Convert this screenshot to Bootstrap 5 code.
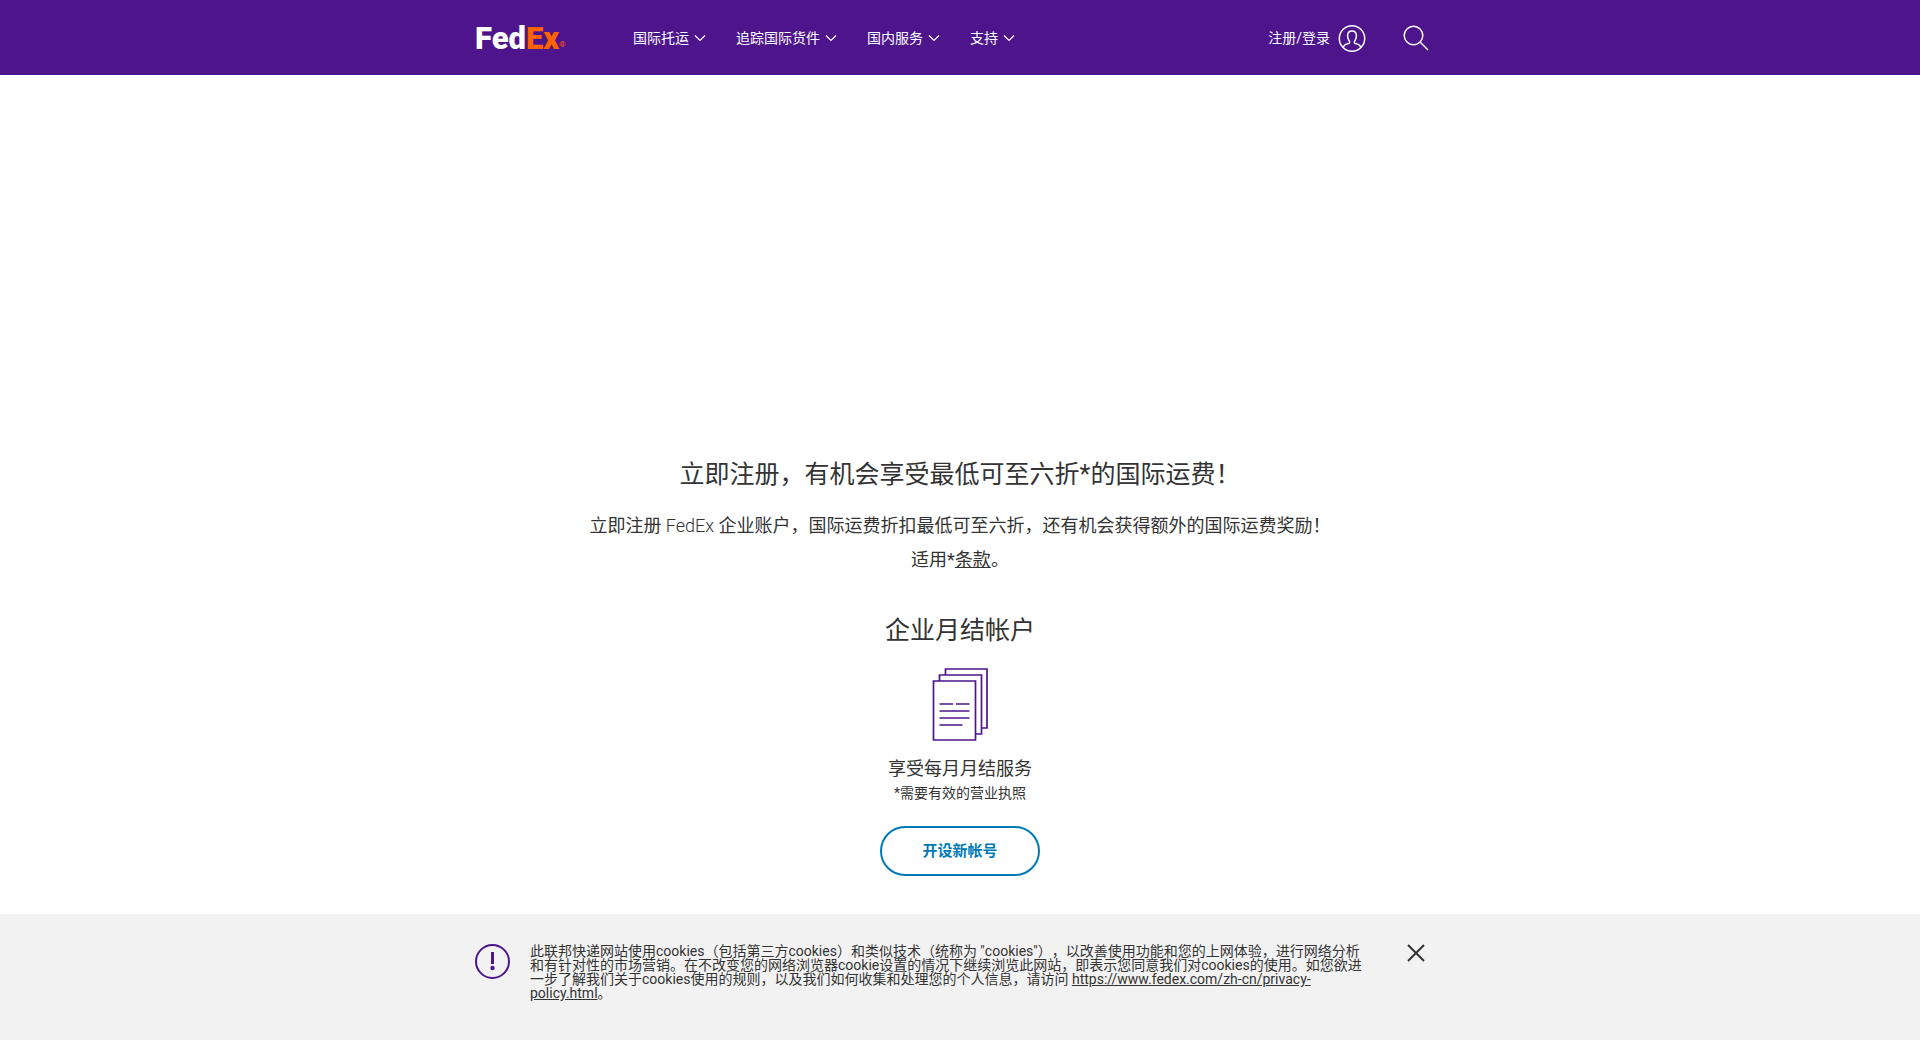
<!DOCTYPE html>
<html lang="zh-CN">
<head>
<meta charset="utf-8">
<meta name="viewport" content="width=device-width, initial-scale=1">
<title>FedEx</title>
<link href="https://cdn.jsdelivr.net/npm/bootstrap@5.3.0/dist/css/bootstrap.min.css" rel="stylesheet">
<style>
body{font-family:Roboto,"Noto Sans CJK SC",sans-serif;font-size:14px;line-height:20px;color:#333;background:#fff;text-spacing-trim:space-all}
.page-width{width:100%;max-width:970px;margin:0 auto}
.site-header{background:#4d148c;min-height:75px}
.brand{font-size:31px;line-height:36px;font-weight:900;color:#fff;width:158px;padding-top:2px}
.brand span{color:#ff6200}
.brand small{font-size:8px;line-height:8px;font-weight:400;color:#ff6200}
.main-menu{gap:30px}
.main-menu button{gap:5px;font-size:14px;line-height:20px}
.account{gap:8px}
.tools{gap:37px;padding-right:16px}
.hero-space{height:380px}
.headline{font-size:25px;line-height:40px;font-weight:400}
.intro{font-size:18px;line-height:34px;margin:14px 0 34px}
.intro .latin{font-weight:300}
.benefit{font-size:18px;line-height:24px}
.note{margin:2px 0 0}
a.terms{color:#333}
.btn-account{border:2px solid #007ab7;color:#007ab7;border-radius:25px;min-width:160px;height:50px;font-size:15px;font-weight:700;margin-top:23px}
.btn-account:hover{background:#007ab7;color:#fff}
.cookie-bar{background:#f2f2f2;min-height:126px;padding-top:30px}
.cookie-text{line-height:14px;max-width:836px}
.cookie-row{gap:20px}
.cookie-close{margin-right:20px}
</style>
</head>
<body>
<header class="site-header d-flex align-items-center">
  <div class="page-width d-flex align-items-center">
    <a href="#" class="brand d-flex align-items-end text-decoration-none" aria-label="FedEx"><div>Fed<span>Ex</span></div><small class="pb-2">®</small></a>
    <nav class="main-menu d-flex align-items-center">
      <button type="button" class="btn btn-link p-0 border-0 text-white text-decoration-none d-flex align-items-center">国际托运<svg width="12" height="8" viewBox="0 0 12 8" fill="none" stroke="#fff" stroke-width="1.2"><path d="M1 1.5l5 5 5-5"/></svg></button>
      <button type="button" class="btn btn-link p-0 border-0 text-white text-decoration-none d-flex align-items-center">追踪国际货件<svg width="12" height="8" viewBox="0 0 12 8" fill="none" stroke="#fff" stroke-width="1.2"><path d="M1 1.5l5 5 5-5"/></svg></button>
      <button type="button" class="btn btn-link p-0 border-0 text-white text-decoration-none d-flex align-items-center">国内服务<svg width="12" height="8" viewBox="0 0 12 8" fill="none" stroke="#fff" stroke-width="1.2"><path d="M1 1.5l5 5 5-5"/></svg></button>
      <button type="button" class="btn btn-link p-0 border-0 text-white text-decoration-none d-flex align-items-center">支持<svg width="12" height="8" viewBox="0 0 12 8" fill="none" stroke="#fff" stroke-width="1.2"><path d="M1 1.5l5 5 5-5"/></svg></button>
    </nav>
    <div class="tools d-flex align-items-center ms-auto">
      <a href="#" class="account d-flex align-items-center text-white text-decoration-none">注册/登录<svg width="28" height="28" viewBox="0 0 28 28" fill="none" stroke="#fff" stroke-width="1.5"><circle cx="14" cy="14.500" r="12.700"/><path d="M5.200 23.500C5.800 20.500 8 20.100 10.700 19.500C12 19.100 11.800 17.500 11 16.500C9.700 14.900 9.500 13.100 9.600 11.300C9.800 8.500 11.500 7 14 7S18.200 8.500 18.400 11.300C18.500 13.100 18.300 14.900 17 16.500C16.200 17.500 16 19.100 17.300 19.500C20 20.100 22.200 20.500 22.800 23.500"/></svg></a>
      <button type="button" class="btn p-0 border-0 d-flex" aria-label="搜索"><svg width="26" height="26" viewBox="0 0 26 26" fill="none" stroke="#fff" stroke-width="1.5"><circle cx="10.500" cy="10.500" r="9.300"/><path d="M17 17l8 8"/></svg></button>
    </div>
  </div>
</header>
<main class="page-width text-center">
  <div class="hero-space"></div>
  <h1 class="headline mb-0">立即注册，有机会享受最低可至六折*的国际运费！</h1>
  <p class="intro">立即注册 <span class="latin">FedEx</span> 企业账户，国际运费折扣最低可至六折，还有机会获得额外的国际运费奖励！<br>适用*<a href="#" class="terms">条款</a>。</p>
  <h2 class="headline mb-3">企业月结帐户</h2>
  <svg class="d-block mx-auto" width="56" height="74" viewBox="0 0 56 74" fill="none" stroke="#4d148c" stroke-width="1.700"><path d="M1.500 14H43.500V73H1.500zM7.500 14V8H49.500V67H43.500M13.500 8V2H55V61H49.500M7.500 37H21M24 37H37.500M7.500 44H37.500M7.500 51H37.500M7.500 58H30.500"/></svg>
  <p class="benefit mt-3 mb-0">享受每月月结服务</p>
  <p class="note">*需要有效的营业执照</p>
  <button type="button" class="btn btn-account">开设新帐号</button>
</main>
<aside class="cookie-bar fixed-bottom">
  <div class="page-width d-flex align-items-start cookie-row">
    <svg class="flex-shrink-0" width="35" height="35" viewBox="0 0 35 35" fill="none" stroke="#4d148c"><circle cx="17.500" cy="17.500" r="16.500" stroke-width="2"/><path d="M17.500 8V20" stroke-width="3"/><circle cx="17.500" cy="24" r="2.200" fill="#4d148c" stroke="none"/></svg>
    <p class="cookie-text mb-0">此联邦快递网站使用cookies（包括第三方cookies）和类似技术（统称为 "cookies"），以改善使用功能和您的上网体验，进行网络分析和有针对性的市场营销。在不改变您的网络浏览器cookie设置的情况下继续浏览此网站，即表示您同意我们对cookies的使用。如您欲进一步了解我们关于cookies使用的规则，以及我们如何收集和处理您的个人信息，请访问 <a href="#" class="terms">https://www.fedex.com/zh-cn/privacy-policy.html</a>。</p>
    <button type="button" class="btn p-0 border-0 d-flex ms-auto cookie-close" aria-label="关闭"><svg width="18" height="20" viewBox="0 0 18 20" fill="none" stroke="#333" stroke-width="2"><path d="M1 1l16 16M17 1L1 17"/></svg></button>
  </div>
</aside>
<script src="https://cdn.jsdelivr.net/npm/bootstrap@5.3.0/dist/js/bootstrap.bundle.min.js"></script>
</body>
</html>
